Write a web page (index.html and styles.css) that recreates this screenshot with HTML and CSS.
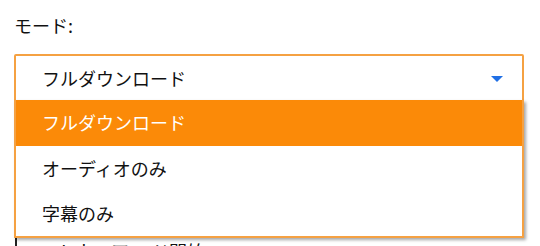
FILE: index.html
```html
<!DOCTYPE html>
<html lang="ja">
<head>
<meta charset="utf-8">
<link rel="stylesheet" href="styles.css">
</head>
<body>
<div class="field">
  <div class="label">モード:</div>
  <div class="select">
    <span class="value">フルダウンロード</span>
    <svg class="arrow" width="12" height="6" viewBox="0 0 12 6"><path d="M0 0H12L6 6Z" fill="#1f6fe5"/></svg>
    <ul class="menu">
      <li class="option active">フルダウンロード</li>
      <li class="option">オーディオのみ</li>
      <li class="option">字幕のみ</li>
    </ul>
  </div>
  <div class="behind"><span class="mark">ソフトウェア ード開始</span></div>
</div>
</body>
</html>
```
FILE: styles.css
```css
html, body {
  margin: 0;
  padding: 0;
  background: #ffffff;
}
body {
  font-family: "Noto Sans CJK JP", "Noto Sans", sans-serif;
  color: #111111;
}
.field {
  width: 510px;
  padding: 13px 0 0 14px;
}
.label {
  font-size: 18px;
  line-height: 24px;
  margin-bottom: 17px;
}
.select {
  position: relative;
  box-sizing: border-box;
  height: 48px;
  border: 2px solid #f5a142;
  border-radius: 2px;
  display: flex;
  align-items: center;
  justify-content: space-between;
  padding: 0 19px 0 26px;
  font-size: 18px;
  background: #fff;
}
.arrow {
  display: block;
  margin-top: 1px;
}
.menu {
  position: absolute;
  top: 100%;
  left: -2px;
  right: -2px;
  margin: 0;
  padding: 0;
  list-style: none;
  background: #fff;
  border: 2px solid #f5a142;
  border-top: none;
  box-shadow: 2px 2px 3px rgba(0,0,0,0.35);
  z-index: 2;
}
.option {
  height: 45px;
  line-height: 45px;
  padding-left: 26px;
  font-size: 18px;
}
.option.active {
  background: #fb8a08;
  color: #fff;
  height: 46px;
  line-height: 44px;
}
.behind {
  margin-top: 137px;
  font-size: 18px;
  line-height: 24px;
}
.mark {
  border-left: 2px solid #222;
  padding-left: 4px;
  margin-left: 1px;
}
```
